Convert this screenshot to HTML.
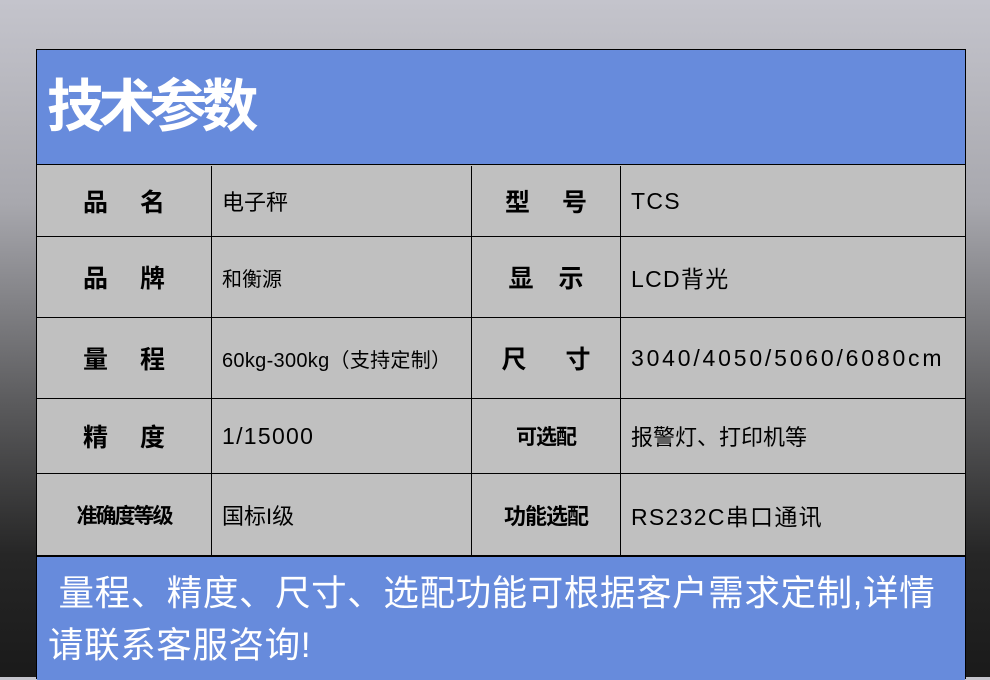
<!DOCTYPE html>
<html><head><meta charset="utf-8"><style>
*{margin:0;padding:0;box-sizing:border-box}
body{width:990px;height:677px;overflow:hidden;background:linear-gradient(#c4c4cc 0%,#a8a8ae 30%,#5a5a5c 60%,#262626 82%,#1a1a1a 100%);font-family:"Liberation Sans","Noto Sans CJK SC",sans-serif;position:relative}
.box{position:absolute;left:36px;top:49px;width:930px;height:630px;border:1px solid #000;background:#c0c0c0}
.hd{position:absolute;left:0;top:0;width:928px;height:115px;background:#678bdc;border-bottom:1px solid #000}
.hd span{position:absolute;left:10px;top:24px;font-size:57px;font-weight:bold;color:#fff;letter-spacing:-5.5px;line-height:66px}
.c{position:absolute;display:flex;align-items:center;border-right:1px solid #000;border-bottom:1px solid #000;font-size:22px;color:#000}
.l{justify-content:center;font-weight:bold;font-size:25px}
.v{padding-left:10px}
.n{font-size:23px;letter-spacing:1.3px}
.ft{position:absolute;left:0;top:506px;width:928px;height:124px;background:#678bdc;border-top:1px solid #000;color:#fff;font-size:35.5px;letter-spacing:0.6px;line-height:52px;padding:10px 0 0 11px;white-space:nowrap}
</style></head><body>
<div class="box">
<div class="hd"><span>技术参数</span></div>
<div class="c l" style="left:0;top:116px;width:175px;height:71px">品&emsp;&nbsp;名</div>
<div class="c v" style="left:175px;top:116px;width:260px;height:71px">电子秤</div>
<div class="c l" style="left:435px;top:116px;width:149px;height:71px">型&emsp;&nbsp;号</div>
<div class="c v n" style="left:584px;top:116px;width:344px;height:71px;border-right:none">TCS</div>

<div class="c l" style="left:0;top:187px;width:175px;height:81px">品&emsp;&nbsp;牌</div>
<div class="c v" style="left:175px;top:187px;width:260px;height:81px;font-size:20px">和衡源</div>
<div class="c l" style="left:435px;top:187px;width:149px;height:81px">显&emsp;示</div>
<div class="c v n" style="left:584px;top:187px;width:344px;height:81px;border-right:none">LCD背光</div>

<div class="c l" style="left:0;top:268px;width:175px;height:81px">量&emsp;&nbsp;程</div>
<div class="c v" style="left:175px;top:268px;width:260px;height:81px;font-size:20px;letter-spacing:0.3px">60kg-300kg（支持定制）</div>
<div class="c l" style="left:435px;top:268px;width:149px;height:81px">尺&emsp;&nbsp;&nbsp;寸</div>
<div class="c v n" style="left:584px;top:268px;width:344px;height:81px;border-right:none;letter-spacing:2.8px">3040/4050/5060/6080cm</div>

<div class="c l" style="left:0;top:349px;width:175px;height:75px">精&emsp;&nbsp;度</div>
<div class="c v n" style="left:175px;top:349px;width:260px;height:75px">1/15000</div>
<div class="c l" style="left:435px;top:349px;width:149px;height:75px;font-size:21px;letter-spacing:-1px">可选配</div>
<div class="c v" style="left:584px;top:349px;width:344px;height:75px;border-right:none">报警灯、打印机等</div>

<div class="c l" style="left:0;top:424px;width:175px;height:82px;font-size:21px;letter-spacing:-2px">准确度等级</div>
<div class="c v" style="left:175px;top:424px;width:260px;height:82px">国标I级</div>
<div class="c l" style="left:435px;top:424px;width:149px;height:82px;font-size:22px;letter-spacing:-1px">功能选配</div>
<div class="c v n" style="left:584px;top:424px;width:344px;height:82px;border-right:none">RS232C串口通讯</div>

<div class="ft">&nbsp;量程、精度、尺寸、选配功能可根据客户需求定制,详情<br>请联系客服咨询!</div>
</div>
</body></html>
